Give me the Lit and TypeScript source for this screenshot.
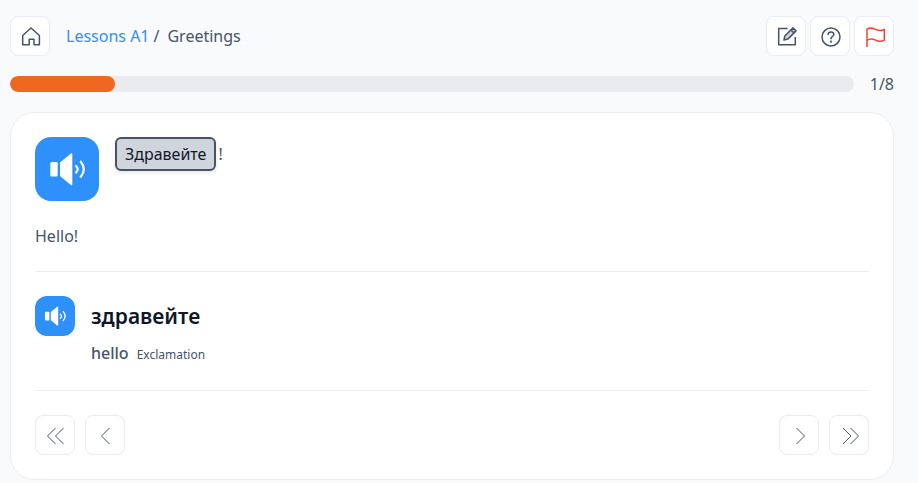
import { LitElement, html, css, svg } from "lit";
import { customElement, property, state } from "lit/decorators.js";

const stroke = (body: unknown, width = 1.5) => html`
  <svg viewBox="0 0 24 24" fill="none" stroke="currentColor" stroke-width=${width} aria-hidden="true">${body}</svg>
`;

const icons = {
  home: stroke(svg`<path d="M4.700 11.500 13 4l8.400 7.500v9.300h-5.400v-5.600h-4.800v5.600H4.700Z" stroke-linejoin="round"/>`),
  edit: stroke(svg`
    <path d="M13.500 4.500H4.700v16.300h16.600V13" stroke-linejoin="round"/>
    <path d="m10 16 .8-4L19 3.900l3 3-8.200 8.200Z" fill="#cfd4dd" stroke-linejoin="round"/>
    <path d="m17 6 3 3"/>`),
  help: stroke(svg`
    <circle cx="13" cy="13" r="9"/>
    <path d="M10.200 10.600c0-1.700 1.200-2.600 2.800-2.600s2.800 1 2.800 2.400c0 1.900-2.800 2.100-2.800 4.300" stroke-linecap="round"/>
    <circle cx="13" cy="17.700" r=".4" fill="currentColor"/>`),
  flag: stroke(svg`<path d="M5 23V5.200c2.600-1.700 5.600-1.200 8.500.2s6 1.600 8.800 0v10.800c-3 1.600-5.900 1.400-8.800-.1s-5.900-1.800-8.500.3" stroke-linejoin="round"/>`),
  first: stroke(svg`<path d="m12.500 5-8 8 8 8M20.500 5l-8 8 8 8"/>`, 1),
  previous: stroke(svg`<path d="m16.500 5-8 8 8 8"/>`, 1),
  next: stroke(svg`<path d="m9.500 5 8 8-8 8"/>`, 1),
  last: stroke(svg`<path d="m6 5 8 8-8 8M13.500 5l8 8-8 8"/>`, 1),
};

@customElement("audio-button")
class AudioButton extends LitElement {
  @property() label = "";
  @property({ type: Boolean, reflect: true }) large = false;

  static styles = css`
    :host { display: block; flex: none; }
    button {
      display: grid; place-items: center; width: 40px; height: 40px;
      border: 0; border-radius: 12px; padding: 0;
      background: #2e90fa; color: #fff; cursor: pointer;
    }
    svg { display: block; width: 24px; height: 24px; }
    :host([large]) button { width: 64px; height: 64px; border-radius: 16px; }
    :host([large]) svg { width: 40px; height: 40px; }
  `;

  render() {
    return html`<button type="button" aria-label=${this.label}>
      <svg viewBox="0 0 40 40" aria-hidden="true">
        <rect x="3.300" y="13" width="7.400" height="14.400" rx="1.500" fill="currentColor"/>
        <path d="M13 13.500 23.800 4.500q1.500-1 1.500 1v29.500q0 2-1.500 1L13 27Z" fill="currentColor"/>
        <path d="M29 17q3.500 3.200 0 6.600M33.800 12.700q6 7.500 0 15" fill="none" stroke="currentColor" stroke-width="2.200" stroke-linecap="round"/>
      </svg>
    </button>`;
  }
}

@customElement("app-root")
class AppRoot extends LitElement {
  @state() private step = 1;
  private readonly total = 8;

  static styles = css`
    :host {
      display: block; box-sizing: border-box; min-height: 100vh;
      padding: 16px 24px 3px 10px;
      background: #f9fafc; color: #475467;
      font: 16px/24px "Noto Sans", sans-serif;
    }
    * { box-sizing: border-box; }
    header, nav, .actions, .progress, .phrase, .pager, .group { display: flex; align-items: center; }
    header { justify-content: space-between; }
    nav { gap: 16px; }
    a { color: #2e90fa; text-decoration: none; }
    .crumbs { display: flex; gap: 8px; }
    .trail { display: flex; gap: 4px; }
    .actions { gap: 4px; }
    .square {
      display: grid; place-items: center; width: 40px; height: 40px; padding: 0;
      border: 1px solid #eaecf0; border-radius: 8px; background: #fff;
      color: #475467; cursor: pointer;
    }
    .square svg { display: block; width: 24px; height: 24px; }
    .flag { color: #f04438; }
    .progress { gap: 16px; margin-top: 16px; }
    .track { flex: 1; height: 16px; border-radius: 8px; background: #eaebef; overflow: hidden; }
    .fill { height: 100%; border-radius: 8px; background: #ef6820; }
    main {
      margin-top: 16px; padding: 24px;
      border: 1px solid #eaecf0; border-radius: 24px; background: #fff;
    }
    p, h2 { margin: 0; }
    .phrase { align-items: flex-start; gap: 16px; }
    .words { display: flex; align-items: center; gap: 2px; }
    .word {
      height: 34px; padding: 0 8px; border: 2px solid #475467; border-radius: 6px;
      background: #d0d5dd; color: #101828; font: inherit;
      box-shadow: 0 2px 4px #1018281a; cursor: pointer;
    }
    .translation { margin-top: 23px; }
    hr { height: 1px; margin: 23px 0 24px; border: 0; background: #eaecf0; }
    .entry { display: grid; grid-template-columns: auto 1fr; gap: 5px 16px; align-items: center; }
    h2 { color: #101828; font-size: 21px; font-weight: 600; line-height: 30px; }
    .meaning { grid-column: 2; display: flex; align-items: baseline; gap: 8px; }
    .meaning b { font-weight: 500; }
    .meaning small { font-size: 12px; }
    .pager { justify-content: space-between; }
    .group { gap: 10px; }
  `;

  private go(step: number) {
    this.step = Math.min(this.total, Math.max(1, step));
  }

  private square(label: string, icon: unknown, step = this.step, extra = "") {
    return html`<button type="button" class="square ${extra}" aria-label=${label}
      @click=${() => this.go(step)}>${icon}</button>`;
  }

  render() {
    return html`
      <header>
        <nav aria-label="Breadcrumb">
          <a class="square" href="#home" aria-label="Home">${icons.home}</a>
          <div class="crumbs">
            <div class="trail"><a href="#lessons">Lessons A1</a><span>/</span></div>
            <span aria-current="page">Greetings</span>
          </div>
        </nav>
        <div class="actions">
          ${this.square("Notes", icons.edit)}
          ${this.square("Help", icons.help)}
          ${this.square("Report a problem", icons.flag, this.step, "flag")}
        </div>
      </header>
      <div class="progress">
        <div class="track" role="progressbar" aria-label="Lesson progress"
          aria-valuemin="0" aria-valuemax=${this.total} aria-valuenow=${this.step}>
          <div class="fill" style="width:${(this.step / this.total) * 100}%"></div>
        </div>
        <span>${this.step}/${this.total}</span>
      </div>
      <main>
        <div class="phrase">
          <audio-button large label="Play phrase"></audio-button>
          <div class="words" lang="bg"><button type="button" class="word">Здравейте</button><span>!</span></div>
        </div>
        <p class="translation">Hello!</p>
        <hr>
        <section class="entry">
          <audio-button label="Play word"></audio-button>
          <h2 lang="bg">здравейте</h2>
          <p class="meaning"><b>hello</b><small>Exclamation</small></p>
        </section>
        <hr>
        <div class="pager">
          <div class="group">
            ${this.square("First", icons.first, 1)}
            ${this.square("Previous", icons.previous, this.step - 1)}
          </div>
          <div class="group">
            ${this.square("Next", icons.next, this.step + 1)}
            ${this.square("Last", icons.last, this.total)}
          </div>
        </div>
      </main>
    `;
  }
}
